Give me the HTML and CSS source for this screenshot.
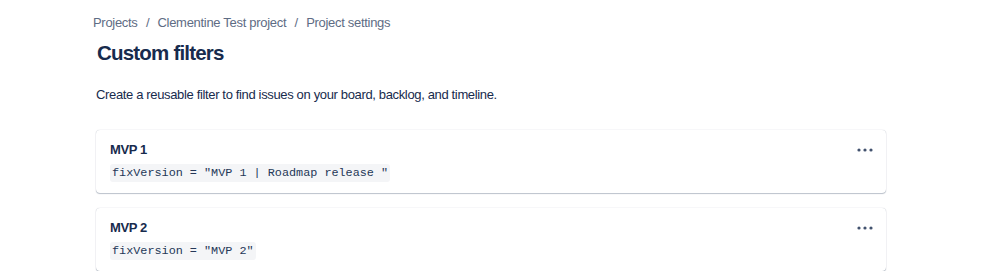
FILE: index.html
```html
<!DOCTYPE html>
<html>
<head>
  <title>Custom filters</title>
  <link rel="stylesheet" href="styles.css">
</head>
<body>
  <div class="page">
    <nav class="breadcrumbs">
      <a href="#">Projects</a>
      <span class="sep">/</span>
      <a href="#">Clementine Test project</a>
      <span class="sep">/</span>
      <a href="#">Project settings</a>
    </nav>
    <h1>Custom filters</h1>
    <p class="intro">Create a reusable filter to find issues on your board, backlog, and timeline.</p>

    <div class="filter-list">
      <div class="filter-card">
        <div class="filter-head">
          <h3>MVP 1</h3>
          <button class="more" aria-label="More">
            <svg width="16" height="4" viewBox="0 0 16 4"><circle cx="2" cy="2" r="1.6"/><circle cx="8" cy="2" r="1.6"/><circle cx="14" cy="2" r="1.6"/></svg>
          </button>
        </div>
        <code>fixVersion = "MVP 1 | Roadmap release "</code>
      </div>
      <div class="filter-card">
        <div class="filter-head">
          <h3>MVP 2</h3>
          <button class="more" aria-label="More">
            <svg width="16" height="4" viewBox="0 0 16 4"><circle cx="2" cy="2" r="1.6"/><circle cx="8" cy="2" r="1.6"/><circle cx="14" cy="2" r="1.6"/></svg>
          </button>
        </div>
        <code>fixVersion = "MVP 2"</code>
      </div>
    </div>
  </div>
</body>
</html>
```

FILE: styles.css
```css
body {
  font-family: "Liberation Sans", Arial, sans-serif;
  margin: 0;
  padding: 0;
  background-color: #fff;
  color: #172b4d;
}

.page {
  width: 790px;
  padding-left: 96px;
  padding-top: 15px;
}

.breadcrumbs {
  font-size: 13px;
  letter-spacing: -0.3px;
  color: #5e6c84;
  margin-left: -3px;
}

.breadcrumbs a {
  color: #5e6c84;
  text-decoration: none;
}

.breadcrumbs .sep {
  padding: 0 5px;
}

h1 {
  font-size: 20.5px;
  font-weight: 600;
  margin: 11px 0 0 1px;
  letter-spacing: -0.8px;
}

.intro {
  font-size: 13px;
  letter-spacing: -0.35px;
  margin: 22px 0 0 0;
}

.filter-list {
  margin-top: 28px;
  display: flex;
  flex-direction: column;
  gap: 15px;
}

.filter-card {
  background-color: #fff;
  border-radius: 4px;
  box-shadow: 0 1px 1px rgba(9, 30, 66, 0.25), 0 0 1px rgba(9, 30, 66, 0.31);
  padding: 12px 14px 11px 14px;
}

.filter-head {
  display: flex;
  justify-content: space-between;
  align-items: center;
}

h3 {
  font-size: 13px;
  font-weight: bold;
  letter-spacing: -0.4px;
  margin: 0;
}

.more {
  background: none;
  border: none;
  padding: 0;
  margin-right: -1px;
  cursor: pointer;
  fill: #42526e;
  display: flex;
}

code {
  display: inline-block;
  margin-top: 7px;
  font-family: "Liberation Mono", "Courier New", monospace;
  font-size: 11.8px;
  background-color: #f4f5f7;
  color: #253858;
  padding: 2px 2px;
  border-radius: 3px;
}
```
